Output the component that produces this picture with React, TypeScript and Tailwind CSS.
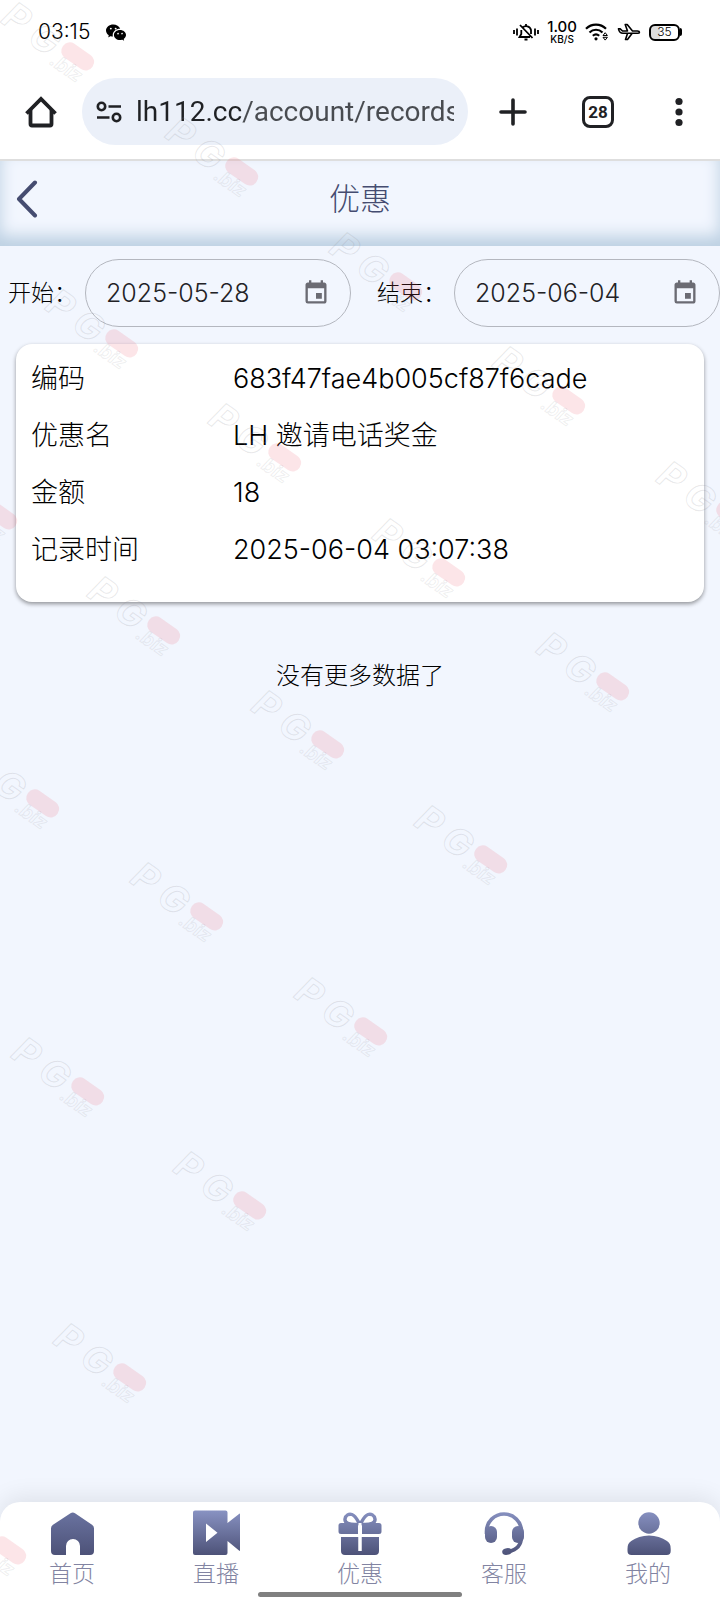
import type { ReactNode } from "react";
import { BsWechat } from "react-icons/bs";
import { MdEvent } from "react-icons/md";

const records = [
  { label: "编码", value: "683f47fae4b005cf87f6cade" },
  { label: "优惠名", value: "LH 邀请电话奖金" },
  { label: "金额", value: "18" },
  { label: "记录时间", value: "2025-06-04 03:07:38" },
];

const watermarks = [
  [78, 56], [242, 171], [406, 286], [569, 400], [733, 515],
  [122, 343], [285, 457], [449, 572], [613, 686],
  [1, 515], [164, 630], [328, 744], [491, 859],
  [43, 803], [207, 916], [371, 1031],
  [88, 1091], [250, 1205], [130, 1377], [10, 1550],
];

function StatusBar() {
  return (
    <div className="flex h-16 items-center justify-between pl-[38px] pr-[38px] text-black">
      <div className="flex items-center gap-4">
        <span className="font-['Inter','Liberation_Sans',sans-serif] text-[21px] font-light leading-6">03:15</span>
        <BsWechat className="h-5 w-5" />
      </div>
      <div className="flex items-center gap-2">
        {/* Muted bell */}
        <svg viewBox="0 0 26 18" className="h-[18px] w-[26px]" fill="none" stroke="currentColor" strokeWidth="1.8">
          <path d="M1 7v4M4 5.500v7M25 7v4M22 5.500v7" />
          <path d="M9.500 4.800A5 5 0 0 1 18 7v4M8.300 7v4L6.500 14H17M13 1v2M11.500 16.500h3M7 2l12.500 13" />
        </svg>
        <div className="flex flex-col items-center font-['Inter','Liberation_Sans',sans-serif]">
          <span className="text-[15px] font-medium leading-[14px]">1.00</span>
          <span className="text-[10px] font-medium leading-[10px]">KB/S</span>
        </div>
        {/* Wifi */}
        <svg viewBox="0 0 24 18" className="h-[18px] w-6" fill="none" stroke="currentColor" strokeWidth="2.200">
          <path d="M1 5.800C6.500.300 15.500.300 21 5.800M4.500 9.500c3.700-3.700 9.300-3.700 13 0M7.800 12.800c2-1.800 4.400-1.800 6.400 0" />
          <circle cx="11" cy="15.800" r="1.600" fill="currentColor" stroke="none" />
          <path d="M18 12.500l2.200-2.800 2.200 2.800zM18 14.300l2.200 2.800 2.200-2.800z" strokeWidth="1" />
        </svg>
        {/* Airplane */}
        <svg viewBox="0 0 24 18" className="h-[18px] w-6" fill="none" stroke="currentColor" strokeWidth="1.600" strokeLinejoin="round">
          <path d="M1.500 5.800h1.700L5.500 8h5L8.200 1.500h2L15.500 8h5c2.600 0 2.600 2.300 0 2.300H6C3.500 10.300 2 8.500 1.500 5.800zM10.500 10.500L8.500 16.500h2l4.500-6" />
        </svg>
        <div className="flex items-center">
          <div className="flex h-[17px] w-[31px] items-center justify-center rounded-md border-2 border-black bg-linear-to-r from-[#dddddd] from-35% to-white to-35% font-['Inter','Liberation_Sans',sans-serif] text-[12px] font-light leading-3">
            35
          </div>
          <span className="h-2 w-0.5 rounded-r bg-black" />
        </div>
      </div>
    </div>
  );
}

function BrowserBar() {
  return (
    <div className="flex items-center border-b-2 border-[#dedede] pb-3.5 pl-6 pr-6 pt-3.5 text-[#202124]">
      <button type="button" aria-label="主页" className="mr-6 shrink-0">
        <svg viewBox="0 0 34 34" className="h-[34px] w-[34px]" fill="none" stroke="currentColor" strokeWidth="3.800">
          <path d="M2.500 18.500L17 4l14.500 14.500" />
          <path d="M6.500 15v14a1.500 1.500 0 0 0 1.500 1.500h18a1.500 1.500 0 0 0 1.500-1.500V15" />
        </svg>
      </button>
      <div className="flex h-[67px] min-w-0 flex-1 items-center rounded-full bg-[#ebf0f9] pl-3.5 pr-3.5">
        <svg viewBox="0 0 26 22" className="mr-3.5 h-[22px] w-[26px] shrink-0" fill="none" stroke="currentColor" strokeWidth="2.600">
          <circle cx="5.500" cy="5.500" r="3.700" />
          <circle cx="20.500" cy="16.500" r="3.700" />
          <path d="M12.500 5.500H25M1 16.500h12.500" />
        </svg>
        <input
          type="text"
          aria-label="网址"
          defaultValue="lh112.cc/account/records"
          className="min-w-0 flex-1 bg-[linear-gradient(90deg,#1f2124_107px,#484b50_107px)] bg-clip-text font-[Roboto,sans-serif] text-[28px] font-normal leading-9 text-transparent outline-none"
        />
      </div>
      <button type="button" aria-label="新标签页" className="ml-7 shrink-0">
        <svg viewBox="0 0 34 34" className="h-[34px] w-[34px]" stroke="currentColor" strokeWidth="3.600" strokeLinecap="round">
          <path d="M17 5v24M5 17h24" />
        </svg>
      </button>
      <button
        type="button"
        className="ml-[52px] flex h-8 w-8 shrink-0 items-center justify-center rounded-lg border-3 border-[#202124] font-[Roboto,sans-serif] text-[17px] font-bold leading-5"
      >
        28
      </button>
      <button type="button" aria-label="菜单" className="ml-12 shrink-0">
        <svg viewBox="0 0 34 34" className="h-[34px] w-[34px]" fill="currentColor">
          <circle cx="17" cy="6.500" r="3.600" />
          <circle cx="17" cy="17" r="3.600" />
          <circle cx="17" cy="27.500" r="3.600" />
        </svg>
      </button>
    </div>
  );
}

function DateField({ id, label, value }: { id: string; label: string; value: string }) {
  return (
    <div className="flex min-w-0 flex-1 items-center gap-2">
      <label htmlFor={id} className="shrink-0 text-[23px] leading-8 text-black">
        {label}：
      </label>
      <div className="flex h-[68px] min-w-0 flex-1 items-center rounded-full border border-[#b4b7bf] pl-5 pr-5">
        <input
          id={id}
          type="text"
          defaultValue={value}
          className="min-w-0 flex-1 bg-transparent text-[25px] leading-8 text-[#222226] outline-none"
        />
        <button type="button" aria-label="选择日期" className="text-[#6b6b73]">
          <MdEvent className="h-7 w-7" />
        </button>
      </div>
    </div>
  );
}

function NavItem({ label, children }: { label: string; children: ReactNode }) {
  return (
    <a href="#" className="flex flex-1 flex-col items-center gap-0.5 text-[23px] leading-8 text-[#8284a2]">
      <svg viewBox="0 0 48 48" className="h-12 w-12" fill="url(#nav-fill)">
        {children}
      </svg>
      {label}
    </a>
  );
}

function BottomNav() {
  return (
    <nav className="mt-auto rounded-t-[20px] bg-white pt-1.5 shadow-[0_-4px_24px_rgba(0,0,0,0.09)]">
      <svg className="absolute h-0 w-0" aria-hidden="true">
        <defs>
          <linearGradient id="nav-fill" gradientUnits="userSpaceOnUse" x1="0" y1="2" x2="0" y2="47">
            <stop offset="0" stopColor="#8993c3" />
            <stop offset="1" stopColor="#4d5278" />
          </linearGradient>
          <linearGradient id="home-fill" gradientUnits="userSpaceOnUse" x1="0" y1="4" x2="0" y2="47">
            <stop offset="0" stopColor="#6a73a0" />
            <stop offset="1" stopColor="#4d5278" />
          </linearGradient>
        </defs>
      </svg>
      <div className="flex">
        <NavItem label="首页">
          <path
            fill="url(#home-fill)"
            d="M22.500 5.200a4 4 0 0 1 4.500 0l17 11.600a4 4 0 0 1 2 3.400V43a4 4 0 0 1-4 4H32V38a7 7 0 0 0-14 0v9H7a4 4 0 0 1-4-4V20.200a4 4 0 0 1 2-3.400z"
          />
        </NavItem>
        <NavItem label="直播">
          <path
            fillRule="evenodd"
            d="M3 2.500h30.500a2 2 0 0 1 2 2V15L47 6q1.500-1 1.500.500V42q0 1.500-1.500.500L35.500 33v12a2 2 0 0 1-2 2H3a2 2 0 0 1-2-2V4.500a2 2 0 0 1 2-2zM14 15.500V34l11.500-9.200z"
          />
        </NavItem>
        <NavItem label="优惠">
          <path
            fill="none"
            stroke="url(#nav-fill)"
            strokeWidth="3.400"
            d="M21 16.500C13 17 8.500 14.500 9 11c.500-4 4-5.500 7-4.500 3.500 1.200 5 5 8 10 3-5 4.500-8.800 8-10 3-1 6.500.500 7 4.500.500 3.500-4 6-12 5.500"
          />
          <path d="M5 15h17v11H5a2.500 2.500 0 0 1-2.500-2.500v-6A2.500 2.500 0 0 1 5 15zM26 15h17a2.500 2.500 0 0 1 2.500 2.500v6A2.500 2.500 0 0 1 43 26H26zM5 29h17.500v14h3V29H43v14a4 4 0 0 1-4 4H9a4 4 0 0 1-4-4z" />
          <path fill="white" d="M22.500 15h3v28h-3z" />
        </NavItem>
        <NavItem label="客服">
          <path
            fill="none"
            stroke="url(#nav-fill)"
            strokeWidth="3.600"
            d="M6.500 26v-2.500a17.500 17.500 0 0 1 35 0V28c0 9-5 14-13 15.500"
          />
          <rect x="5" y="18" width="12" height="17" rx="6" />
          <rect x="32" y="18" width="12" height="17" rx="6" />
          <ellipse cx="27" cy="43.500" rx="4.800" ry="3.300" transform="rotate(-8 27 43.500)" />
        </NavItem>
        <NavItem label="我的">
          <circle cx="25" cy="15" r="10.700" />
          <path d="M25 27.500c7 0 13 2.200 18 5.500q4 2.500 3.700 8v2A4 4 0 0 1 42.700 47H7.500a4 4 0 0 1-4-4v-2q-.300-5.500 3.700-8c5-3.300 10.800-5.500 17.800-5.500z" />
        </NavItem>
      </div>
      {/* Gesture bar */}
      <div className="pb-[3px] pt-0.5">
        <div className="mx-auto h-[5px] w-[204px] rounded-full bg-[#808080]" />
      </div>
    </nav>
  );
}

function Watermark() {
  return (
    <svg className="pointer-events-none absolute inset-0 h-full w-full" aria-hidden="true">
      {watermarks.map(([x, y]) => (
        <g key={`${x}-${y}`} transform={`translate(${x} ${y}) rotate(35)`}>
          <g fill="none" stroke="#8a8a92" strokeOpacity="0.2" fontFamily="Inter, Liberation Sans, sans-serif" fontWeight="700" fontStyle="italic">
            <text x="-84" y="17" fontSize="37">P</text>
            <text x="-51" y="18" fontSize="37">G</text>
            <text x="-20" y="23" fontSize="19" strokeOpacity="0.14">.biz</text>
          </g>
          <rect x="-18" y="-8" width="36" height="17" rx="8" fill="#ee6070" fillOpacity="0.16" />
        </g>
      ))}
    </svg>
  );
}

export default function App() {
  return (
    <div className="relative flex min-h-screen flex-col overflow-hidden bg-[#f2f6fe] font-['Inter','Noto_Sans_CJK_SC',sans-serif] font-light">
      <div className="bg-white font-normal">
        <StatusBar />
        <BrowserBar />
      </div>

      <header className="flex h-[85px] items-center px-4 pb-2.5 text-[#454c70] shadow-[inset_0_-10px_16px_#bcd0e2]">
        <button type="button" aria-label="返回" className="w-10">
          <svg viewBox="0 0 24 38" className="h-[38px] w-6" fill="none" stroke="currentColor" strokeWidth="4" strokeLinecap="round" strokeLinejoin="round">
            <path d="M19 2.500L3 19l16 16.500" />
          </svg>
        </button>
        <h1 className="flex-1 text-center text-[31px] leading-10">优惠</h1>
        <span className="w-10" />
      </header>

      <div className="flex gap-[26px] pl-2 pt-[13px]">
        <DateField id="start" label="开始" value="2025-05-28" />
        <DateField id="end" label="结束" value="2025-06-04" />
      </div>

      <main className="px-4 pt-[17px]">
        <dl className="flex flex-col gap-[17px] rounded-2xl bg-white pb-8 pl-[15px] pr-4 pt-[15px] text-[27px] leading-10 text-black shadow-[0_2px_4px_rgba(0,0,0,0.4)]">
          {records.map((record) => (
            <div key={record.label} className="flex">
              <dt className="w-[202px] shrink-0">{record.label}</dt>
              <dd className="min-w-0 flex-1">{record.value}</dd>
            </div>
          ))}
        </dl>
        <p className="pt-14 text-center text-[24px] leading-9 text-black">没有更多数据了</p>
      </main>

      <BottomNav />
      <Watermark />
    </div>
  );
}
